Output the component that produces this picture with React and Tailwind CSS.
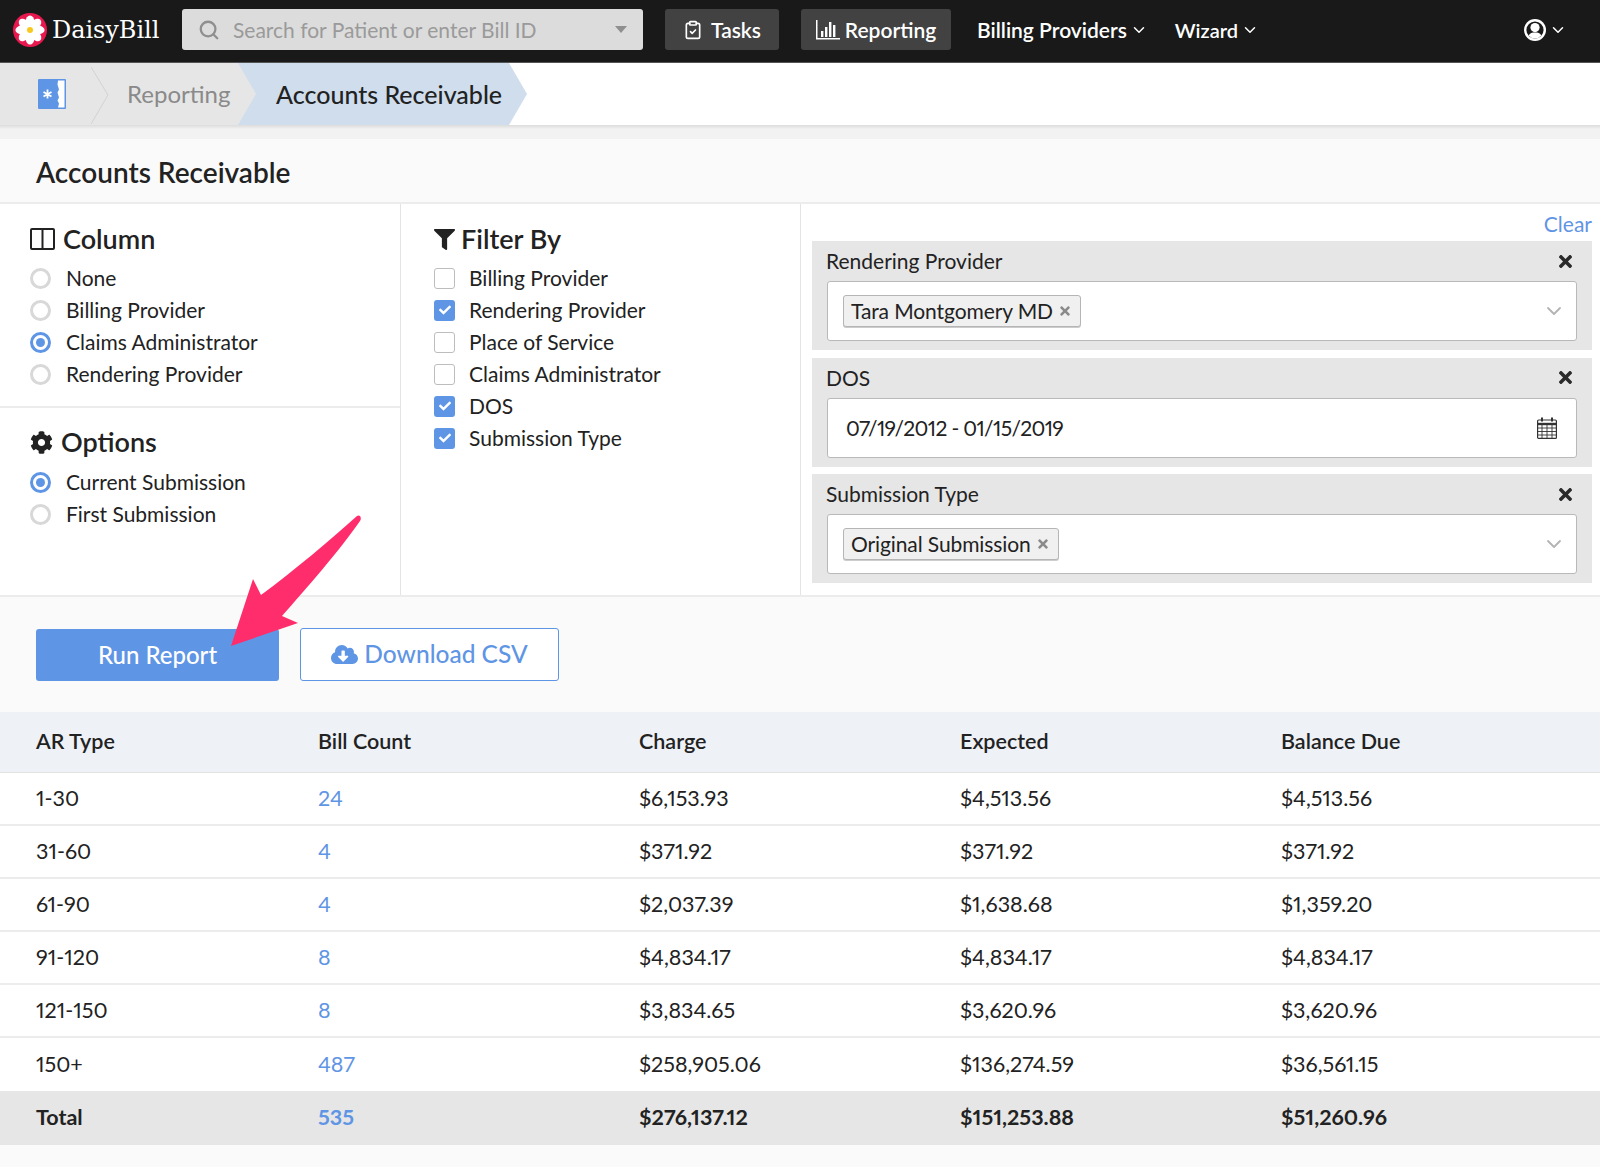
import React from "react";
import { ChevronDown, Search, ClipboardCheck } from "lucide-react";
import { FaCog, FaFilter, FaTimes, FaCloudDownloadAlt, FaCheck } from "react-icons/fa";

const columnOptions = [
  { label: "None" },
  { label: "Billing Provider" },
  { label: "Claims Administrator", on: true },
  { label: "Rendering Provider" },
];
const submissionOptions = [{ label: "Current Submission", on: true }, { label: "First Submission" }];
const filterOptions = [
  { label: "Billing Provider" },
  { label: "Rendering Provider", on: true },
  { label: "Place of Service" },
  { label: "Claims Administrator" },
  { label: "DOS", on: true },
  { label: "Submission Type", on: true },
];

const rows = [
  ["1-30", "24", "$6,153.93", "$4,513.56", "$4,513.56"],
  ["31-60", "4", "$371.92", "$371.92", "$371.92"],
  ["61-90", "4", "$2,037.39", "$1,638.68", "$1,359.20"],
  ["91-120", "8", "$4,834.17", "$4,834.17", "$4,834.17"],
  ["121-150", "8", "$3,834.65", "$3,620.96", "$3,620.96"],
  ["150+", "487", "$258,905.06", "$136,274.59", "$36,561.15"],
];

const gridCols = "grid grid-cols-[282px_321px_321px_321px_1fr] pl-9 pb-[1px] items-center text-[21.5px]";

function Daisy() {
  const petals = [0, 45, 90, 135, 180, 225, 270, 315];
  return (
    <svg width="34" height="34" viewBox="0 0 34 34" className="shrink-0">
      <circle cx="17" cy="17" r="17" fill="#e8184f" />
      {petals.map((a) => (
        <ellipse key={a} cx="17" cy="9" rx="4.4" ry="6.6" fill="#fff" transform={`rotate(${a} 17 17)`} />
      ))}
      <circle cx="17" cy="17" r="3" fill="#f7c81e" />
    </svg>
  );
}

function UserIcon() {
  return (
    <svg width="22" height="22" viewBox="0 0 22 22" className="ml-auto">
      <circle cx="11" cy="11" r="11" fill="#fff" />
      <circle cx="11" cy="11" r="8.6" fill="#191919" />
      <circle cx="11" cy="8.6" r="4.6" fill="#fff" />
      <path d="M4.6 16.5C6 14 8 13.6 11 13.6s5 .4 6.4 2.9A8.6 8.6 0 0 1 11 19.6a8.6 8.6 0 0 1-6.4-3.1z" fill="#fff" />
    </svg>
  );
}

function Radio({ on }) {
  return (
    <span
      className={
        on
          ? "flex h-[21px] w-[21px] items-center justify-center rounded-full border-[3px] border-[#5f95e5] bg-white"
          : "h-[21px] w-[21px] rounded-full border-[3px] border-[#d8d8d8] bg-white"
      }
    >
      {on && <span className="h-[9px] w-[9px] rounded-full bg-[#5f95e5]" />}
    </span>
  );
}

function Check({ on }) {
  return on ? (
    <span className="flex h-[21px] w-[21px] items-center justify-center rounded-[3px] bg-[#5f95e5] text-white">
      <FaCheck size={12} />
    </span>
  ) : (
    <span className="h-[21px] w-[21px] rounded-[3px] border border-[#bdbdbd] bg-white" />
  );
}

function OptionRow({ label, control, gap }) {
  return (
    <div className="flex h-8 items-center">
      {control}
      <span className={gap}>{label}</span>
    </div>
  );
}

function FilterPanel({ title, children }) {
  return (
    <div className="h-[109px] bg-[#e6e6e6] pl-[15px] pr-[15px]">
      <div className="flex h-10 items-center justify-between">
        <span className="-ml-px">{title}</span>
        <FaTimes size={19} className="mr-[2px] text-[#2a2a2a]" />
      </div>
      <div className="flex h-[60px] items-center justify-between rounded-[3px] border border-[#b9b9b9] bg-white pl-[15px] pr-[10px]">
        {children}
      </div>
    </div>
  );
}

function Chip({ label }) {
  return (
    <>
      <span className="flex h-8 items-center gap-[5px] rounded-[3px] border border-[#b5b5b5] bg-[#f0f0f0] pl-[7px] pr-[8px] tracking-[-0.1px] shadow-[0_1px_0_#ccc]">
        {label}
        <FaTimes size={14} className="text-[#8a8a8a]" />
      </span>
      <ChevronDown size={24} strokeWidth={1.8} className="text-[#b3b3b3]" />
    </>
  );
}

function TopButton({ gap, children }) {
  return (
    <div className={`flex h-[41px] items-center justify-center rounded-[3px] bg-[#424242] ${gap}`}>{children}</div>
  );
}

export default function App() {
  return (
    <div className="relative min-h-[1167px] w-[1600px] bg-[#fafafa] font-['Lato',sans-serif] text-[21px] text-[#222] proportional-nums">
      {/* top nav */}
      <nav className="flex h-[63px] items-center border-b border-[#555] bg-[#191919] pb-[3px] pl-[13px] text-white">
        <Daisy />
        <span className="ml-[5px] w-[110px] font-['DejaVu_Serif',serif] text-[24px] tracking-[-0.05px]">DaisyBill</span>
        <div className="ml-5 flex h-[41px] w-[461px] items-center rounded-[3px] bg-[#dcdcdc] pl-4 pr-4 text-[#9a9a9a]">
          <Search size={22} strokeWidth={2.5} className="text-[#8f8f8f]" />
          <span className="ml-[13px] flex-1">Search for Patient or enter Bill ID</span>
          <span className="h-0 w-0 border-x-[6px] border-t-[7px] border-x-transparent border-t-[#8f8f8f]" />
        </div>
        <div className="ml-[22px] w-[114px]">
          <TopButton gap="gap-[8px]">
            <ClipboardCheck size={20} />
            <span className="font-semibold">Tasks</span>
          </TopButton>
        </div>
        <div className="ml-[22px] w-[150px]">
          <TopButton gap="gap-[5px]">
            <svg width="24" height="22" viewBox="0 0 24 22" fill="#fff">
              <path d="M0 1h1.5v18H24v1.5H0z" />
              <path d="M5 12h2.4v6H5zM9 8h2.4v10H9zM13 3h2.4v15H13zM17 6h2.4v12H17z" />
            </svg>
            <span className="font-semibold">Reporting</span>
          </TopButton>
        </div>
        <span className="ml-[26px] font-semibold">Billing Providers</span>
        <ChevronDown size={18} className="ml-[3px]" />
        <span className="ml-[27px] text-[20px] font-semibold">Wizard</span>
        <ChevronDown size={18} className="ml-[3px]" />
        <UserIcon />
        <ChevronDown size={18} className="ml-[3px] mr-[33px]" />
      </nav>

      {/* breadcrumb */}
      <div className="flex h-[62px] bg-white">
        <div className="relative z-10 flex w-[256px] items-center bg-[#e6e6e6] [clip-path:polygon(0_0,238px_0,100%_50%,238px_100%,0_100%)]">
          <svg width="28" height="30" viewBox="0 0 28 30" className="ml-[38px]">
            <rect width="28" height="30" rx="1" fill="#5f95e5" />
            <path d="M20 1.5h6.5v27H20l1-4-1.5-3 1.5-3-1.5-5 1.5-3-1.5-5z" fill="#fff" />
            <path d="M9.5 10.5v9M5.5 13l8 4.5M13.5 13l-8 4.5" stroke="#fff" strokeWidth="1.8" />
          </svg>
          <svg width="18" height="62" viewBox="0 0 18 62" className="absolute left-[91px] top-0" fill="none">
            <path d="M0 4l17 28L0 61" stroke="#d2d2d2" />
          </svg>
          <span className="ml-[61px] text-[24px] text-[#8a8a8a]">Reporting</span>
        </div>
        <div className="ml-[-18px] flex w-[289px] items-center bg-[#cfdded] pl-[38px] pt-px text-[25px] font-medium [clip-path:polygon(0_0,271px_0,100%_50%,271px_100%,0_100%)]">
          Accounts Receivable
        </div>
      </div>
      <div className="h-[14px] bg-gradient-to-b from-[#dcdcdc] to-[#f2f2f2] to-30%" />

      {/* title */}
      <div className="flex h-[65px] items-center border-b-2 border-[#ececec] pl-9 pt-[3px] text-[28px] font-semibold">
        Accounts Receivable
      </div>

      {/* config */}
      <div className="flex h-[393px] border-b-2 border-[#ececec] bg-white">
        <div className="flex w-[401px] flex-col border-r border-[#e4e4e4]">
          <section className="h-[204px] border-b-2 border-[#ececec] pl-[30px] pt-[17px]">
            <h2 className="mb-[5px] flex h-9 items-center gap-2 text-[27px] font-semibold">
              <svg width="25" height="22" viewBox="0 0 25 22" fill="none" stroke="#222" strokeWidth="2">
                <rect x="1" y="1" width="23" height="20" rx="1" />
                <path d="M12.5 1v20" />
              </svg>
              Column
            </h2>
            {columnOptions.map((o) => (
              <OptionRow key={o.label} label={o.label} gap="ml-[15px]" control={<Radio on={o.on} />} />
            ))}
          </section>
          <section className="pl-[30px] pt-[16px]">
            <h2 className="mb-[6px] flex h-9 items-center gap-2 text-[27px] font-semibold">
              <FaCog size={23} />
              Options
            </h2>
            {submissionOptions.map((o) => (
              <OptionRow key={o.label} label={o.label} gap="ml-[15px]" control={<Radio on={o.on} />} />
            ))}
          </section>
        </div>

        <div className="w-[400px] border-r border-[#e4e4e4] pl-[33px] pt-[17px]">
          <h2 className="mb-[5px] flex h-9 items-center gap-[6px] text-[27px] font-semibold">
            <FaFilter size={21} />
            Filter By
          </h2>
          {filterOptions.map((o) => (
            <OptionRow key={o.label} label={o.label} gap="ml-[14px]" control={<Check on={o.on} />} />
          ))}
        </div>

        <div className="flex-1 pl-[11px] pr-2">
          <div className="flex h-[37px] items-end justify-end pb-[2px] text-[#5f95e5]">Clear</div>
          <div className="flex flex-col gap-[7.5px]">
            <FilterPanel title="Rendering Provider">
              <Chip label="Tara Montgomery MD" />
            </FilterPanel>
            <FilterPanel title="DOS">
              <span className="pl-[3px] tracking-[-0.65px]">07/19/2012 - 01/15/2019</span>
              <svg width="20" height="22" viewBox="0 0 20 22" fill="none" stroke="#333" strokeWidth="1.2" className="mr-[9px]">
                <rect x="0.6" y="3" width="18.8" height="18.4" rx="1" />
                <path d="M.6 7h18.8" strokeWidth="2.4" />
                <path d="M.6 11h18.8M.6 14.5h18.8M.6 18h18.8M5 7v14M10 7v14M15 7v14" strokeWidth="0.9" />
                <path d="M5 .5v4M15 .5v4" strokeWidth="2" />
              </svg>
            </FilterPanel>
            <FilterPanel title="Submission Type">
              <Chip label="Original Submission" />
            </FilterPanel>
          </div>
        </div>
      </div>

      {/* actions */}
      <div className="flex h-[115px] items-center gap-[21px] pl-9">
        <button className="h-[52px] w-[243px] rounded-[3px] bg-[#5f95e5] text-[24px] font-medium text-white">Run Report</button>
        <button className="flex h-[53px] w-[259px] items-center justify-center gap-[6px] rounded-[3px] border border-[#5f95e5] bg-white text-[24.5px] font-medium text-[#5f95e5]">
          <FaCloudDownloadAlt size={27} />
          Download CSV
        </button>
      </div>

      {/* table */}
      <div className={`${gridCols} h-[61px] border-b border-[#e2e2e2] bg-[#eef1f6] font-semibold`}>
        <span>AR Type</span>
        <span>Bill Count</span>
        <span>Charge</span>
        <span>Expected</span>
        <span>Balance Due</span>
      </div>
      {rows.map((r, i) => (
        <div key={r[0]} className={`${gridCols} h-[53px] bg-white ${i < 5 ? "border-b-2 border-[#ececec]" : ""}`}>
          <span>{r[0]}</span>
          <span className="text-[#5f95e5]">{r[1]}</span>
          <span>{r[2]}</span>
          <span>{r[3]}</span>
          <span>{r[4]}</span>
        </div>
      ))}
      <div className={`${gridCols} h-[54px] bg-[#e6e6e6] font-bold`}>
        <span>Total</span>
        <span className="text-[#5f95e5]">535</span>
        <span>$276,137.12</span>
        <span>$151,253.88</span>
        <span>$51,260.96</span>
      </div>

      {/* annotation arrow over the button */}
      <svg width="140" height="140" viewBox="225 510 140 140" className="absolute left-[225px] top-[510px]">
        <path
          d="M231 646L253 579L261 595C295 570 330 540 357 516C360 514 362 518 360 521C340 550 305 590 282 616L298 623Z"
          fill="#ff2d6b"
        />
      </svg>
    </div>
  );
}
